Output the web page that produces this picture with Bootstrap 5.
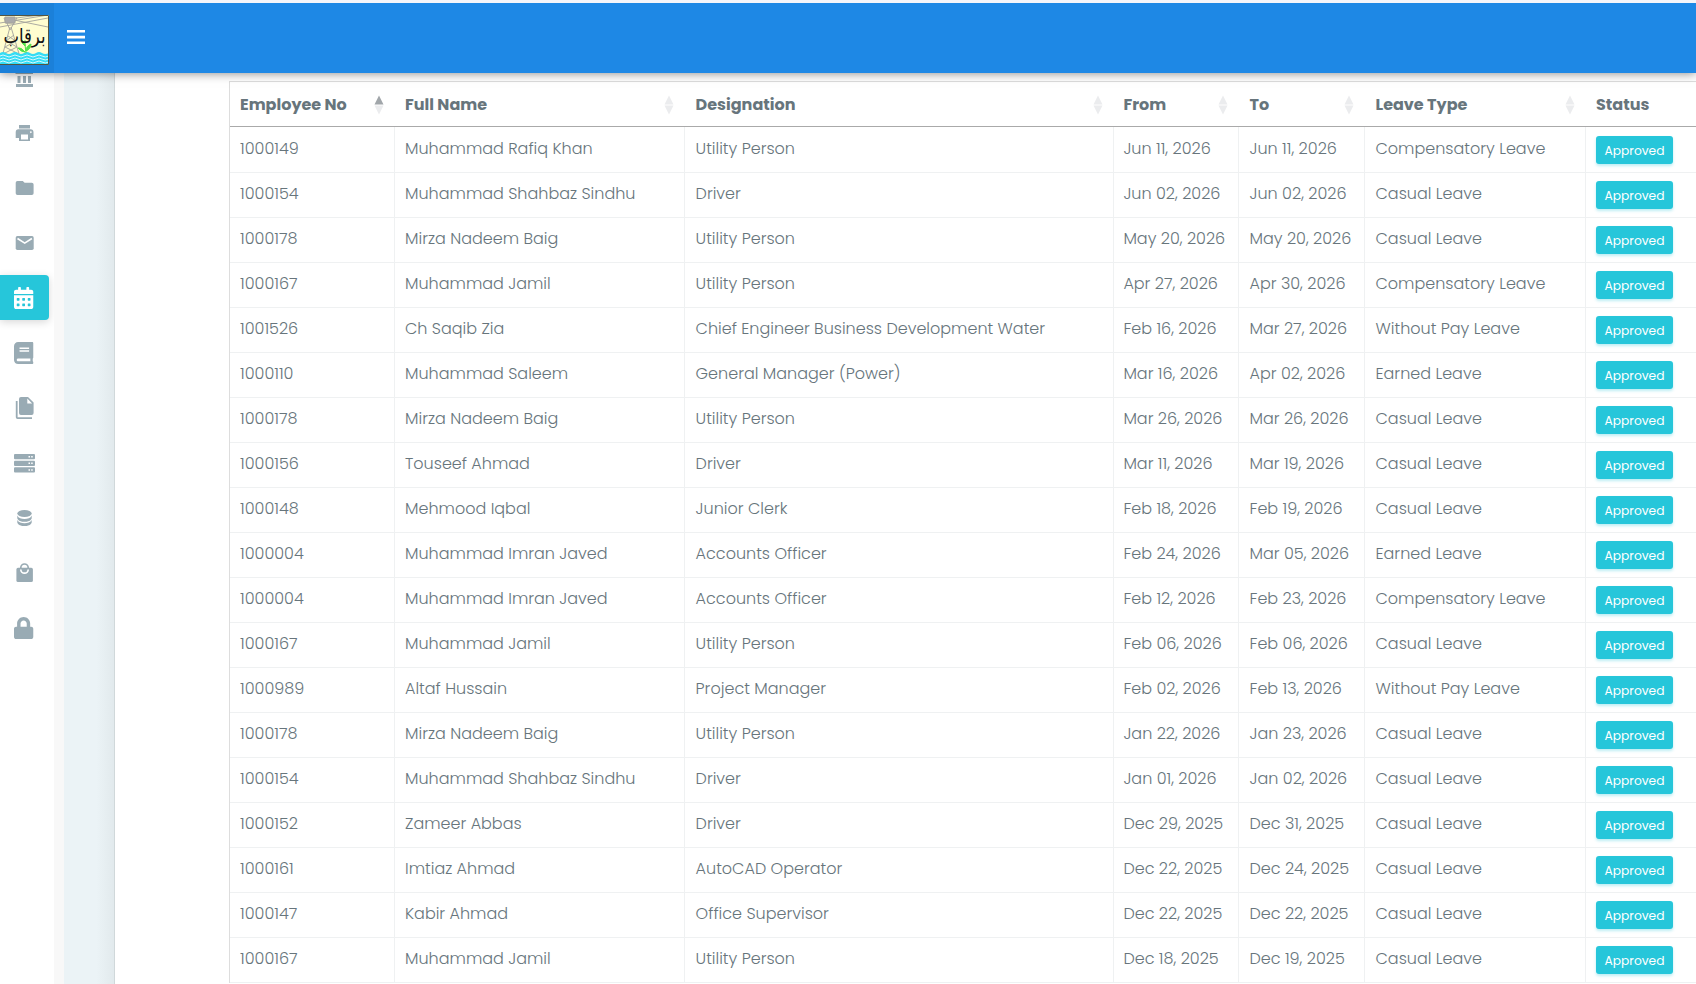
<!DOCTYPE html>
<html lang="en">
<head>
<meta charset="utf-8">
<title>Employee Leaves</title>
<meta name="viewport" content="width=device-width, initial-scale=1">
<link href="https://cdn.jsdelivr.net/npm/bootstrap@5.3.0/dist/css/bootstrap.min.css" rel="stylesheet">
<style>
body{font-family:Poppins,Inter,"Noto Sans",sans-serif;font-size:16px;font-weight:300;color:#67757c;background:#fff;height:984px;overflow:hidden}
.topbar{height:73px;border-top:3px solid #f4f5fa;background:#1e88e5;box-shadow:0 0 10px rgba(0,0,0,.5);z-index:20}
.brand-box{width:54px;height:70px;background:#1b80d9;padding-top:12px}
.burger{width:18px;height:14px;margin:-2px 0 0 13px}
.side{width:54px;padding-top:50px;flex:none;background:#fff}
.side a{height:55px;width:49px;display:block;flex:none;color:#99abb4}
.side a.on{height:45px;margin:5px 0;background:#26c6da;color:#fff;border-radius:0 4px 4px 0;box-shadow:0 2px 9px rgba(0,0,0,.16)}
.side svg{display:block;fill:currentColor}
.strip{width:10px;background:#f8f8f8;flex:none}
.gutter{width:51px;flex:none;background:linear-gradient(90deg,#ebf3f6 0 65%,#e2eaed 98%);border-right:1px solid #d0d8da}
.sheet{padding:81px 0 0 114px;overflow:hidden}
.leaves{width:1500px;table-layout:fixed;border-collapse:separate;border-spacing:0;border:1px solid #ddd;border-bottom:0;color:#67757c;margin:0}
.leaves th,.leaves td{padding:0 10px;white-space:nowrap;vertical-align:top;line-height:24px}
.leaves th{height:45px;padding-top:11px;font-weight:700;border-bottom:1px solid #aaa;position:relative}
.leaves td{height:45px;padding-top:9px;border:0 solid #eff1f2;border-width:0 1px 1px 0}
.leaves tbody tr:first-child td{height:46px;padding-top:10px}
.leaves th:nth-child(3),.leaves td:nth-child(3){padding-left:10.6px}
.leaves th:nth-child(4),.leaves td:nth-child(4){padding-left:9.4px}
.leaves th:nth-child(5),.leaves td:nth-child(5),.leaves th:nth-child(6),.leaves td:nth-child(6){padding-left:10.5px}
.sorter{position:absolute;right:11px;top:13px;width:10px;height:20px;fill:#ebecee}
.sorter .hot{fill:#a1a6aa}
.btn-ok{--bs-btn-font-size:12.25px;--bs-btn-padding-x:0;--bs-btn-padding-y:0;width:77px;height:28px;line-height:27px;color:#fff;background:#26c6da;border:0;border-radius:3px;font-weight:400;box-shadow:0 2px 3px rgba(38,198,218,.3);padding-top:1px;margin-top:-1px;display:block}
</style>
</head>
<body>
<nav class="topbar fixed-top d-flex align-items-center">
  <div class="brand-box">
    <svg width="49" height="50" viewBox="0 0 49 50" class="d-block">
      <rect width="49" height="50" fill="#fffdd0"/>
      <g stroke="#a3a29c" stroke-width=".9" fill="none"><path d="M0 8L48 0M0 12L48 3M14 5L48 12M16 3L40 0M4 3h13l-3 5H6zM7 8l3 7 4-7M10 12L2 42M11 12l9 30M8 21l8 5-11 6 14 7M14 20l-8 6 11 6-14 7"/><path d="M5 2h10v6H5z" fill="#aaa"/></g>
      <path d="M0 38q3-2 6 0t6 0 6 0 6 0 6 0 6 0 6 0 7 0V50H0z" fill="#35dcf4"/>
      <g stroke="#fff" stroke-width=".8" fill="none"><path id="wv" d="M0 41q3-2 6 0t6 0 6 0 6 0 6 0 6 0 6 0 7 0"/><use href="#wv" y="3"/><use href="#wv" y="6"/></g>
      <path d="M26 38q-1-6-1-13M25 37q-4-5-7-4 3 4 7 4M26 36q0-5 5-7 0 5-5 7M25 31q-4-3-3-6 3 2 3 6" fill="#54e04a" stroke="#54e04a"/>
      <text x="24.500" y="28" text-anchor="middle" direction="rtl" font-family="DejaVu Sans, sans-serif" font-size="20" textLength="42" lengthAdjust="spacingAndGlyphs" font-weight="400" fill="#111">برقاب</text>
      <path d="M0 .5h48.500v49H0" fill="none" stroke="#555540"/>
    </svg>
  </div>
  <svg class="burger" viewBox="0 0 18 14" fill="#fff"><path d="M0 0h18v2.600H0zM0 5.800h18v2.600H0zM0 11.400h18V14H0z"/></svg>
</nav>
<div class="d-flex h-100">
  <aside class="side d-flex flex-column">
    <a href="#"><svg width="49" height="55"><path d="M15.500 24V21l9-4 8.500 4v3zM17.500 26h3v7h-3zM23 26h3v7h-3zM28 26h3v7h-3zM16 34h17v3H16z"/></svg></a>
    <a href="#"><svg width="49" height="55"><path fill-rule="evenodd" d="M19 20h11v3.500H19zM18.500 24.300h12a3 3 0 0 1 3 3V33H30v3H19v-3h-3.300v-5.700a3 3 0 0 1 2.800-3zM21 29.500v5h7v-5zM30.800 26.200a.9.900 0 1 0 .1 0z"/></svg></a>
    <a href="#"><svg width="49" height="55"><path d="M17.500 21h5.300l1.800 1.800h7.200a1.800 1.800 0 0 1 1.800 1.800v8.600a1.800 1.800 0 0 1-1.800 1.800H17.500a1.800 1.800 0 0 1-1.800-1.800V22.800a1.800 1.800 0 0 1 1.800-1.800z"/></svg></a>
    <a href="#"><svg width="49" height="55"><rect x="15.700" y="21" width="18" height="14" rx="1.700"/><path d="M17.500 23.500l7.200 4.600 7.200-4.600" fill="none" stroke="#fff" stroke-width="1.700"/></svg></a>
    <a href="#" class="on"><svg width="49" height="45"><path transform="translate(14 12) scale(.043)" d="M0 464c0 26.500 21.500 48 48 48h352c26.500 0 48-21.500 48-48V192H0v272zm320-196c0-6.600 5.400-12 12-12h40c6.600 0 12 5.400 12 12v40c0 6.600-5.400 12-12 12h-40c-6.600 0-12-5.400-12-12v-40zm0 128c0-6.600 5.400-12 12-12h40c6.600 0 12 5.400 12 12v40c0 6.600-5.400 12-12 12h-40c-6.600 0-12-5.400-12-12v-40zM192 268c0-6.600 5.400-12 12-12h40c6.600 0 12 5.400 12 12v40c0 6.600-5.400 12-12 12h-40c-6.600 0-12-5.400-12-12v-40zm0 128c0-6.600 5.400-12 12-12h40c6.600 0 12 5.400 12 12v40c0 6.600-5.400 12-12 12h-40c-6.600 0-12-5.400-12-12v-40zM64 268c0-6.600 5.400-12 12-12h40c6.600 0 12 5.400 12 12v40c0 6.600-5.400 12-12 12H76c-6.600 0-12-5.400-12-12v-40zm0 128c0-6.600 5.400-12 12-12h40c6.600 0 12 5.400 12 12v40c0 6.600-5.400 12-12 12H76c-6.600 0-12-5.400-12-12v-40zM400 64h-48V16c0-8.800-7.200-16-16-16h-32c-8.800 0-16 7.200-16 16v48H160V16c0-8.800-7.200-16-16-16h-32c-8.800 0-16 7.200-16 16v48H48C21.500 64 0 85.500 0 112v48h448v-48c0-26.500-21.500-48-48-48z"/></svg></a>
    <a href="#"><svg width="49" height="55"><path transform="translate(14 17) scale(.043)" d="M448 360V24c0-13.300-10.700-24-24-24H96C43 0 0 43 0 96v320c0 53 43 96 96 96h328c13.300 0 24-10.700 24-24v-16c0-7.500-3.500-14.300-8.900-18.700-4.200-15.400-4.200-59.300 0-74.700 5.400-4.300 8.900-11.100 8.900-18.600zM128 134c0-3.300 2.700-6 6-6h212c3.300 0 6 2.700 6 6v20c0 3.300-2.700 6-6 6H134c-3.300 0-6-2.700-6-6v-20zm0 64c0-3.300 2.700-6 6-6h212c3.300 0 6 2.700 6 6v20c0 3.300-2.700 6-6 6H134c-3.300 0-6-2.700-6-6v-20zm253.400 250H96c-17.700 0-32-14.300-32-32 0-17.600 14.400-32 32-32h285.400c-1.900 17.100-1.900 46.900 0 64z"/></svg></a>
    <a href="#"><svg width="49" height="55"><path fill-rule="evenodd" d="M21 17h7l5.600 5.600V33a2 2 0 0 1-2 2H21a2 2 0 0 1-2-2V19a2 2 0 0 1 2-2zM27.300 18.600V23.400h4.800z"/><path d="M15.800 21h1.800v16.200H32V39H17.600a1.800 1.800 0 0 1-1.800-1.800z"/></svg></a>
    <a href="#"><svg width="49" height="55"><g><rect x="14" y="19" width="21" height="5.200" rx="1"/><rect x="14" y="25.700" width="21" height="5.200" rx="1"/><rect x="14" y="32.300" width="21" height="5.200" rx="1"/></g><path fill="#fff" d="M28.500 21h1.500v1.500h-1.500zM31.200 21h1.500v1.500h-1.500zM28.500 27.600h1.500v1.500h-1.500zM31.200 27.600h1.500v1.500h-1.500zM28.500 34.200h1.500v1.500h-1.500zM31.200 34.200h1.500v1.500h-1.500z"/></svg></a>
    <a href="#"><svg width="49" height="55"><ellipse cx="24.500" cy="23.500" rx="7.200" ry="3.500"/><path d="M17.300 25.500c1 2.600 4.200 3.400 7.200 3.400s6.200-.8 7.200-3.400v2.700c-.4 2.500-4 3.600-7.200 3.600s-6.800-1.100-7.200-3.600zM17.300 30c1 2.400 4.200 3.200 7.200 3.200s6.200-.8 7.200-3.200v2.400c-.4 2.500-4 3.600-7.200 3.600s-6.800-1.100-7.200-3.600z"/></svg></a>
    <a href="#"><svg width="49" height="55"><rect x="16.400" y="22.800" width="16.500" height="14.200" rx="1.600"/><path d="M20.800 23.500v-.8a3.700 3.700 0 0 1 7.400 0v.8" fill="none" stroke="currentColor" stroke-width="1.700"/><path d="M20.800 24.500a3.700 3.700 0 0 0 7.400 0" fill="none" stroke="#fff" stroke-width="1.700"/></svg></a>
    <a href="#"><svg width="49" height="55"><path transform="translate(14 17) scale(.043)" d="M400 224h-24v-72C376 68.200 307.800 0 224 0S72 68.200 72 152v72H48c-26.500 0-48 21.500-48 48v192c0 26.500 21.500 48 48 48h352c26.500 0 48-21.500 48-48V272c0-26.500-21.500-48-48-48zm-104 0H152v-72c0-39.700 32.300-72 72-72s72 32.300 72 72v72z"/></svg></a>
  </aside>
  <div class="strip"></div>
  <div class="gutter"></div>
  <main class="sheet flex-fill">
    <table class="leaves">
      <colgroup><col style="width:165px"><col style="width:290px"><col style="width:429px"><col style="width:125px"><col style="width:126px"><col style="width:221px"><col></colgroup>
      <thead><tr id="heads"></tr></thead>
      <tbody id="rows"></tbody>
    </table>
  </main>
</div>
<script src="https://cdn.jsdelivr.net/npm/bootstrap@5.3.0/dist/js/bootstrap.bundle.min.js"></script>
<script>
const heads = ['Employee No','Full Name','Designation','From','To','Leave Type','Status'];
const rows = `1000149|Muhammad Rafiq Khan|Utility Person|Jun 11, 2026|Jun 11, 2026|Compensatory Leave
1000154|Muhammad Shahbaz Sindhu|Driver|Jun 02, 2026|Jun 02, 2026|Casual Leave
1000178|Mirza Nadeem Baig|Utility Person|May 20, 2026|May 20, 2026|Casual Leave
1000167|Muhammad Jamil|Utility Person|Apr 27, 2026|Apr 30, 2026|Compensatory Leave
1001526|Ch Saqib Zia|Chief Engineer Business Development Water|Feb 16, 2026|Mar 27, 2026|Without Pay Leave
1000110|Muhammad Saleem|General Manager (Power)|Mar 16, 2026|Apr 02, 2026|Earned Leave
1000178|Mirza Nadeem Baig|Utility Person|Mar 26, 2026|Mar 26, 2026|Casual Leave
1000156|Touseef Ahmad|Driver|Mar 11, 2026|Mar 19, 2026|Casual Leave
1000148|Mehmood Iqbal|Junior Clerk|Feb 18, 2026|Feb 19, 2026|Casual Leave
1000004|Muhammad Imran Javed|Accounts Officer|Feb 24, 2026|Mar 05, 2026|Earned Leave
1000004|Muhammad Imran Javed|Accounts Officer|Feb 12, 2026|Feb 23, 2026|Compensatory Leave
1000167|Muhammad Jamil|Utility Person|Feb 06, 2026|Feb 06, 2026|Casual Leave
1000989|Altaf Hussain|Project Manager|Feb 02, 2026|Feb 13, 2026|Without Pay Leave
1000178|Mirza Nadeem Baig|Utility Person|Jan 22, 2026|Jan 23, 2026|Casual Leave
1000154|Muhammad Shahbaz Sindhu|Driver|Jan 01, 2026|Jan 02, 2026|Casual Leave
1000152|Zameer Abbas|Driver|Dec 29, 2025|Dec 31, 2025|Casual Leave
1000161|Imtiaz Ahmad|AutoCAD Operator|Dec 22, 2025|Dec 24, 2025|Casual Leave
1000147|Kabir Ahmad|Office Supervisor|Dec 22, 2025|Dec 22, 2025|Casual Leave
1000167|Muhammad Jamil|Utility Person|Dec 18, 2025|Dec 19, 2025|Casual Leave`.split('\n').map(r => r.split('|'));

document.getElementById('heads').innerHTML = heads.map((t,i) =>
  `<th>${t}${i<6?`<svg class="sorter" viewBox="0 0 10 20"><path class="${i?'':'hot'}" d="M5 .5l4.500 9h-9z"/><path d="M.500 10.500h9L5 19.500z"/></svg>`:''}</th>`).join('');
document.getElementById('rows').innerHTML = rows.map(r =>
  '<tr>' + r.map(t => `<td>${t}</td>`).join('') +
  '<td><button class="btn btn-ok" type="button">Approved</button></td></tr>').join('');
</script>
</body>
</html>
